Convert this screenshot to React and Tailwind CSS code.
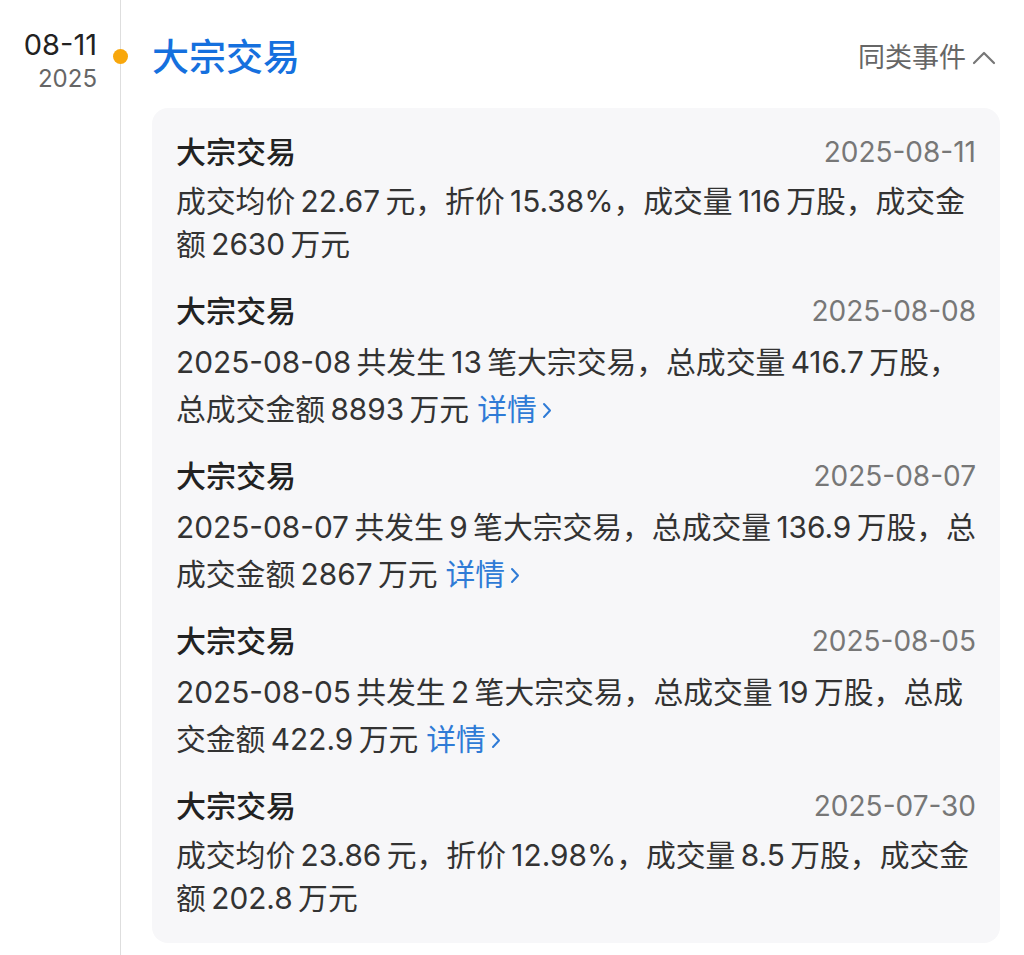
import React from "react";

const sp = (s) =>
  s
    .replace(/([\u4e00-\u9fff])([0-9])/g, "$1\u2009$2")
    .replace(/([0-9%])([\u4e00-\u9fff])/g, "$1\u2009$2");

const items = [
  {
    date: "2025-08-11",
    lines: ["成交均价22.67元，折价15.38%，成交量116万股，成交金", "额2630万元"],
    link: false,
  },
  {
    date: "2025-08-08",
    lines: ["2025-08-08共发生13笔大宗交易，总成交量416.7万股，", "总成交金额8893万元"],
    link: true,
  },
  {
    date: "2025-08-07",
    lines: ["2025-08-07共发生9笔大宗交易，总成交量136.9万股，总", "成交金额2867万元"],
    link: true,
  },
  {
    date: "2025-08-05",
    lines: ["2025-08-05共发生2笔大宗交易，总成交量19万股，总成", "交金额422.9万元"],
    link: true,
  },
  {
    date: "2025-07-30",
    lines: ["成交均价23.86元，折价12.98%，成交量8.5万股，成交金", "额202.8万元"],
    link: false,
  },
];

function Item({ item, index }) {
  const lh = item.link ? "h-[47px] leading-[47px]" : "h-[43px] leading-[43px]";
  const mt = index === 0 ? "" : index === 1 ? "mt-[25px]" : "mt-[23px]";
  return (
    <div className={mt}>
      <div className="flex h-[40px] items-center justify-between">
        <span className="text-[30px] font-medium leading-[40px] text-[#222222]">大宗交易</span>
        <span className="text-[28px] leading-[40px] text-[#777777]">{item.date}</span>
      </div>
      <div className="mt-[8px] text-[29.8px] text-[#333333]">
        <div className={`${lh} whitespace-nowrap`}>{sp(item.lines[0])}</div>
        <div className={`${lh} flex items-center whitespace-nowrap`}>
          <span>{sp(item.lines[1])}</span>
          {item.link && (
            <span className="ml-[8px] flex items-center text-[#2f7bd6]">
              <span>详情</span>
              <svg width="10" height="17" viewBox="0 0 10 17" className="ml-[5px] mt-[2px]">
                <path d="M2 2 L8 8.5 L2 15" fill="none" stroke="#2f7bd6" strokeWidth="2" strokeLinecap="round" strokeLinejoin="round" />
              </svg>
            </span>
          )}
        </div>
      </div>
    </div>
  );
}

export default function App() {
  return (
    <div className="flex h-[955px] w-[1024px] overflow-hidden bg-white font-['Inter','Noto_Sans_CJK_SC',sans-serif]">
      <div className="flex w-[120px] shrink-0 flex-col items-end pr-[23px] pt-[28px]">
        <div className="text-[29px] leading-[34px] text-[#222222]">08-11</div>
        <div className="mt-[3px] text-[24px] leading-[28px] text-[#666666]">2025</div>
      </div>
      <div className="relative w-px shrink-0 self-stretch bg-[#dedede]">
        <div className="absolute left-[-7px] top-[49px] h-[15px] w-[15px] rounded-full bg-[#f8a70c]" />
      </div>
      <div className="min-w-0 flex-1 pl-[31px] pr-[24px]">
        <div className="mt-[36px] flex h-[44px] items-center justify-between pr-[4px]">
          <span className="text-[37px] font-medium leading-[44px] text-[#1570de]">大宗交易</span>
          <span className="flex items-center text-[27px] text-[#666666]">
            <span>同类事件</span>
            <svg width="24" height="14" viewBox="0 0 24 14" className="ml-[6px]">
              <path d="M2 12 L12 2 L22 12" fill="none" stroke="#777777" strokeWidth="2.2" strokeLinecap="round" strokeLinejoin="round" />
            </svg>
          </span>
        </div>
        <div className="mt-[28px] overflow-hidden rounded-[16px] bg-[#f7f7f9] px-[24px] pb-[23px] pt-[24px]">
          {items.map((it, i) => (
            <Item key={it.date} item={it} index={i} />
          ))}
        </div>
      </div>
    </div>
  );
}
